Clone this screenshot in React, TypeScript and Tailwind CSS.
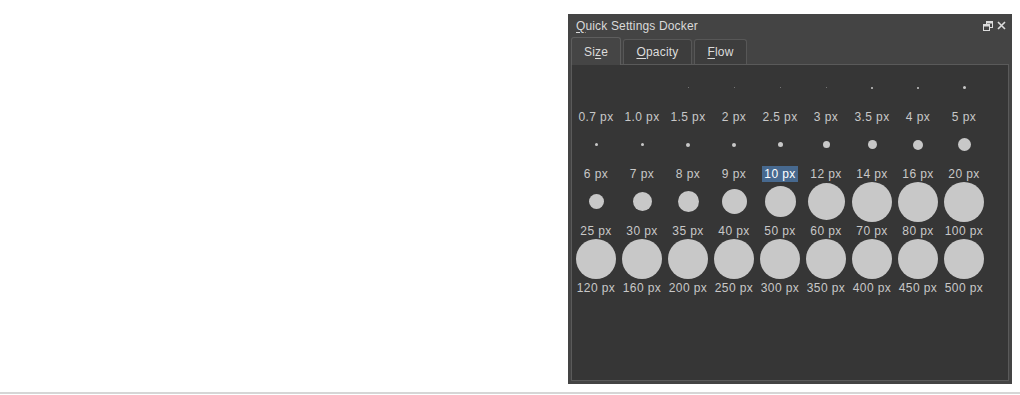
import React from "react"

const rows: { label: string; d: number; faint?: boolean }[][] = [
  [
    { label: "0.7 px", d: 0 },
    { label: "1.0 px", d: 0 },
    { label: "1.5 px", d: 1, faint: true },
    { label: "2 px", d: 1, faint: true },
    { label: "2.5 px", d: 1, faint: true },
    { label: "3 px", d: 1, faint: true },
    { label: "3.5 px", d: 2 },
    { label: "4 px", d: 2 },
    { label: "5 px", d: 3 },
  ],
  [
    { label: "6 px", d: 3 },
    { label: "7 px", d: 3 },
    { label: "8 px", d: 4 },
    { label: "9 px", d: 4 },
    { label: "10 px", d: 5 },
    { label: "12 px", d: 7 },
    { label: "14 px", d: 9 },
    { label: "16 px", d: 10 },
    { label: "20 px", d: 13 },
  ],
  [
    { label: "25 px", d: 15 },
    { label: "30 px", d: 19 },
    { label: "35 px", d: 21 },
    { label: "40 px", d: 25 },
    { label: "50 px", d: 31 },
    { label: "60 px", d: 37 },
    { label: "70 px", d: 40 },
    { label: "80 px", d: 40 },
    { label: "100 px", d: 40 },
  ],
  [
    { label: "120 px", d: 40 },
    { label: "160 px", d: 40 },
    { label: "200 px", d: 40 },
    { label: "250 px", d: 40 },
    { label: "300 px", d: 40 },
    { label: "350 px", d: 40 },
    { label: "400 px", d: 40 },
    { label: "450 px", d: 40 },
    { label: "500 px", d: 40 },
  ],
]

function Tab({ mn, rest, pre = "", active = false, w }: { mn: string; rest: string; pre?: string; active?: boolean; w: string }) {
  return (
    <div
      className={
        active
          ? `${w} h-[28px] -mb-px z-10 flex items-center justify-center rounded-t-[3px] border border-b-0 border-[#5e5e5e] bg-[#454545]`
          : `${w} h-[25px] flex items-center justify-center rounded-t-[3px] border border-b-0 border-[#575757] bg-[#3d3d3d]`
      }
    >
      <span className="text-[12px] text-[#dcdcdc] tracking-[0.2px]">
        {pre}
        <span className="underline underline-offset-2">{mn}</span>
        {rest}
      </span>
    </div>
  )
}

export default function App() {
  return (
    <div className="w-[1020px] h-[395px] bg-white flex flex-col" style={{ fontFamily: '"Liberation Sans", Arial, sans-serif' }}>
      <div className="flex-1 pt-[14px] pl-[568px]">
        <div className="w-[444px] h-[370px] bg-[#444444] flex flex-col px-[3px] pb-[3px]">
          {/* title bar */}
          <div className="h-[23px] flex items-center justify-between pl-[5px] pr-[3px]">
            <span className="text-[12px] text-[#dadada] tracking-[0.15px]">
              <span className="underline underline-offset-2">Q</span>uick Settings Docker
            </span>
            <div className="flex items-center gap-[4px]">
              <svg width="10" height="10" viewBox="0 0 10 10">
                <rect x="3.5" y="0.5" width="6" height="6" fill="none" stroke="#dcdcdc" />
                <rect x="3.5" y="0.5" width="6" height="2" fill="#dcdcdc" />
                <rect x="0.5" y="3.5" width="6" height="6" fill="#444444" stroke="#dcdcdc" />
                <rect x="0.5" y="3.5" width="6" height="2" fill="#dcdcdc" />
              </svg>
              <svg width="9" height="9" viewBox="0 0 9 9">
                <path d="M1 1 L8 8 M8 1 L1 8" stroke="#dcdcdc" strokeWidth="1.6" />
              </svg>
            </div>
          </div>
          {/* tabs */}
          <div className="flex items-end gap-[2px] h-[27px]">
            <Tab w="w-[50px]" pre="Si" mn="z" rest="e" active />
            <Tab w="w-[69px]" mn="O" rest="pacity" />
            <Tab w="w-[53px]" mn="F" rest="low" />
          </div>
          {/* content pane */}
          <div className="flex-1 border border-[#5a5a5a] bg-[#363636] pt-[2px] pl-px">
            <div className="grid grid-cols-[repeat(9,46px)]">
              {rows.flat().map((c) => (
                <div key={c.label} className="h-[57px] flex flex-col items-center">
                  <div className="h-[41px] flex items-center justify-center">
                    <div
                      className={`rounded-full ${c.faint ? "bg-[#8a8a8a]" : "bg-[#c8c8c8]"}`}
                      style={{ width: c.d, height: c.d }}
                    />
                  </div>
                  <div className="h-[16px] pt-px flex items-center">
                    <span
                      className={
                        c.label === "10 px"
                          ? "px-[2px] leading-[16px] text-[12px] tracking-[0.4px] bg-[#47698f] text-white"
                          : "px-[2px] leading-[16px] text-[12px] tracking-[0.4px] text-[#c8c8c8]"
                      }
                    >
                      {c.label}
                    </span>
                  </div>
                </div>
              ))}
            </div>
          </div>
        </div>
      </div>
      <div className="h-[2px] bg-[#d6d6d6] mb-px" />
    </div>
  )
}
